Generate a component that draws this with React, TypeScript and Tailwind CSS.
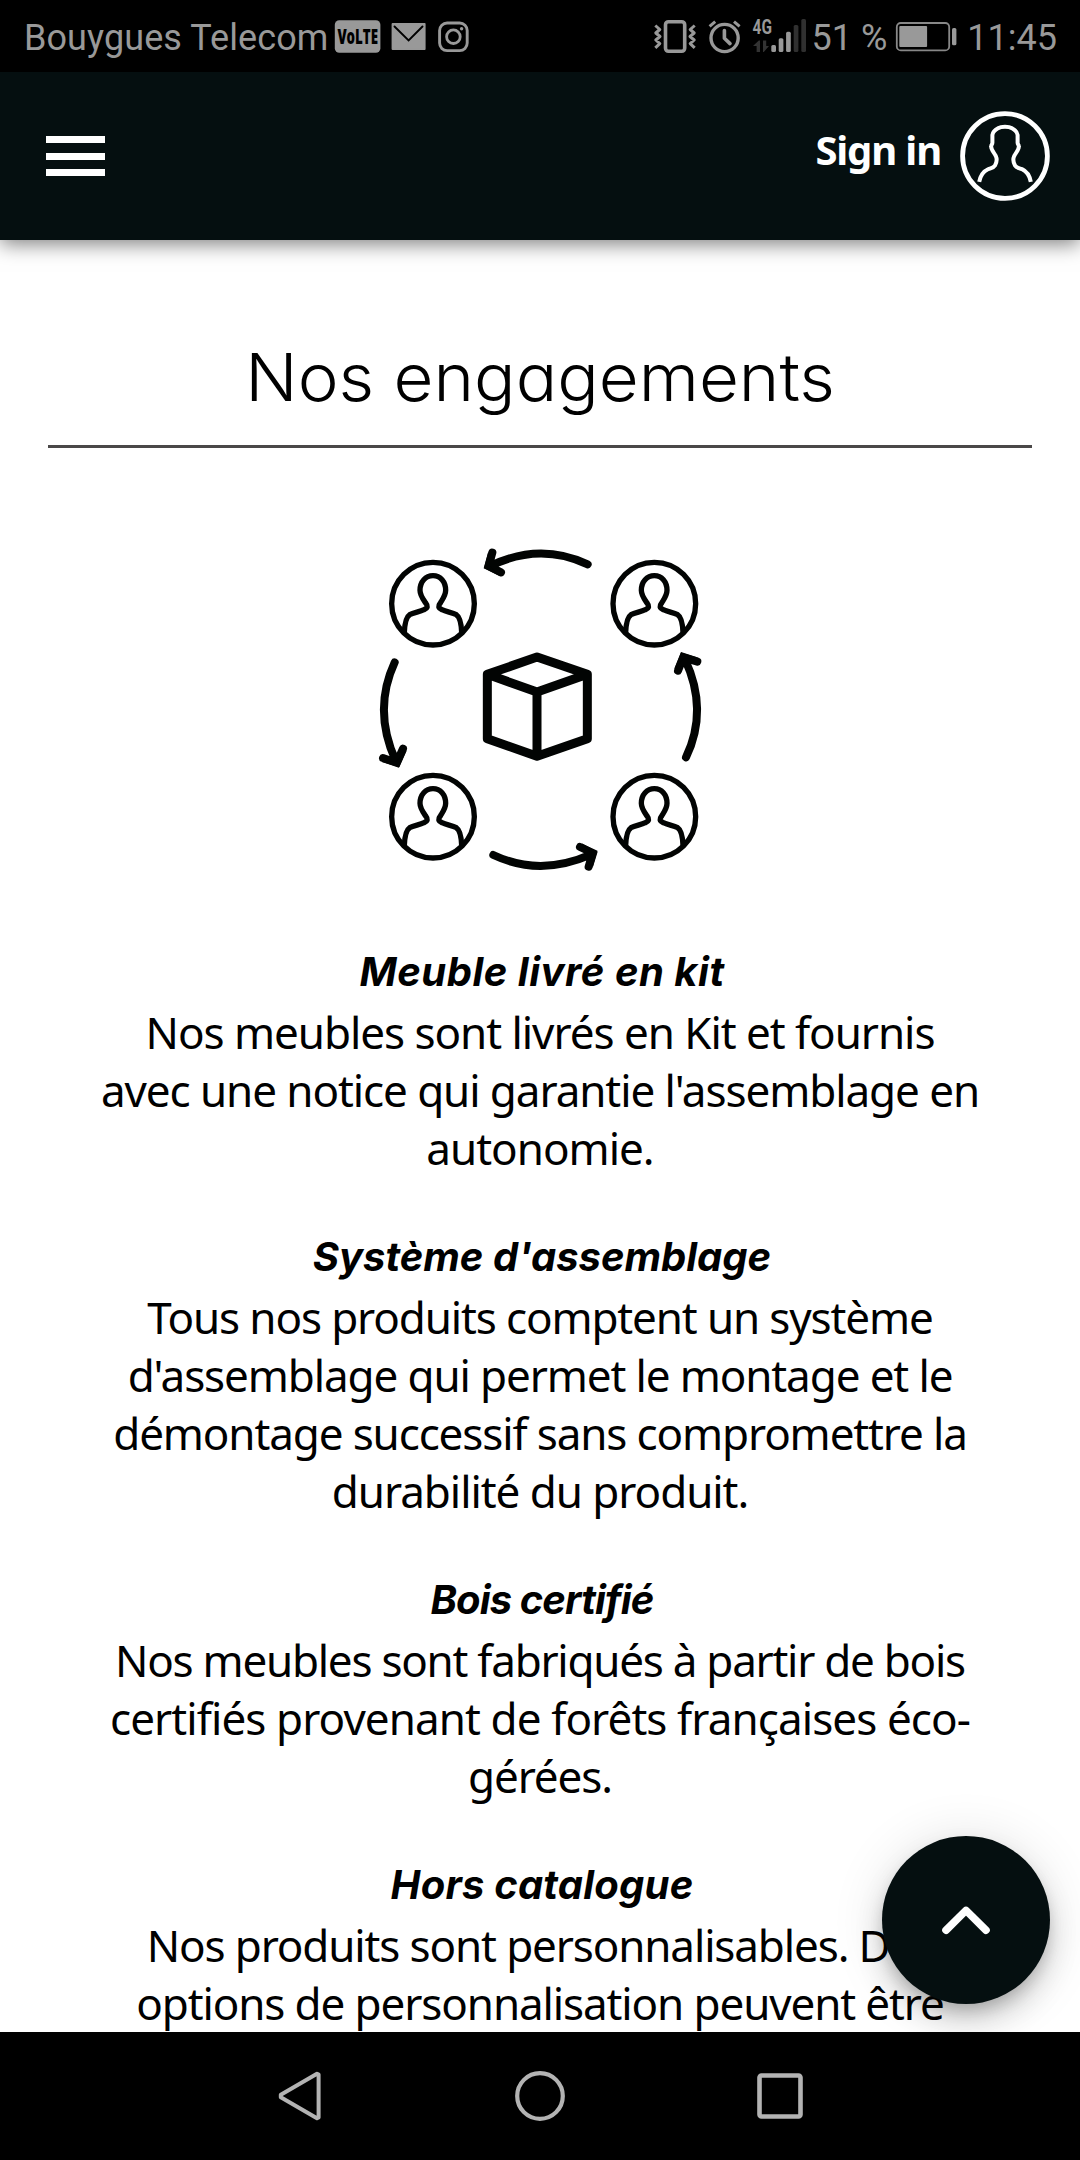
import React from 'react';

type Line = { text: string; tracking: string };
type Commitment = { title: string; titleTracking: string; lines: Line[] };

const commitments: Commitment[] = [
  {
    title: 'Meuble livré en kit',
    titleTracking: 'tracking-[0.5px]',
    lines: [
      { text: 'Nos meubles sont livrés en Kit et fournis', tracking: 'tracking-[-1.04px]' },
      { text: "avec une notice qui garantie l'assemblage en", tracking: 'tracking-[-1.08px]' },
      { text: 'autonomie.', tracking: 'tracking-[-1px]' },
    ],
  },
  {
    title: "Système d'assemblage",
    titleTracking: 'tracking-[0px]',
    lines: [
      { text: 'Tous nos produits comptent un système', tracking: 'tracking-[-1.13px]' },
      { text: "d'assemblage qui permet le montage et le", tracking: 'tracking-[-1.12px]' },
      { text: 'démontage successif sans compromettre la', tracking: 'tracking-[-1.13px]' },
      { text: 'durabilité du produit.', tracking: 'tracking-[-1.05px]' },
    ],
  },
  {
    title: 'Bois certifié',
    titleTracking: 'tracking-[-0.9px]',
    lines: [
      { text: 'Nos meubles sont fabriqués à partir de bois', tracking: 'tracking-[-1.26px]' },
      { text: 'certifiés provenant de forêts françaises éco-', tracking: 'tracking-[-0.91px]' },
      { text: 'gérées.', tracking: 'tracking-[-1.1px]' },
    ],
  },
  {
    title: 'Hors catalogue',
    titleTracking: 'tracking-[0.2px]',
    lines: [
      { text: 'Nos produits sont personnalisables. Des', tracking: 'tracking-[-1.13px]' },
      { text: 'options de personnalisation peuvent être', tracking: 'tracking-[-1.11px]' },
    ],
  },
];

function StatusBar() {
  return (
    <div className="flex h-[72px] shrink-0 items-center justify-between bg-black pr-[23px] pl-6 font-[Roboto,sans-serif] text-4xl text-[#999999]">
      <div className="flex items-center">
        <span className="pt-[3px] leading-[42px] tracking-[0.08px]">Bouygues Telecom</span>
        <svg className="ml-0.5 h-[72px] w-[145px]" viewBox="330 0 145 72" fill="none">
          <rect x="334.8" y="20.3" width="45.6" height="32.4" rx="4.5" fill="#999" />
          <text x="337.4" y="44" textLength="40.6" lengthAdjust="spacingAndGlyphs" className="fill-black font-['Open_Sans',sans-serif] text-[20.5px] font-extrabold">VoLTE</text>
          <rect x="391.6" y="23" width="34" height="27" rx="1" fill="#999" />
          <path d="M394.5 26.5 408.6 40.5 422.5 26.5" stroke="#000" strokeWidth="1.9" strokeLinecap="round" />
          <rect x="439.6" y="23" width="27.6" height="27.6" rx="7.5" stroke="#999" strokeWidth="2.9" />
          <circle cx="453.4" cy="36.7" r="6.8" stroke="#999" strokeWidth="2.8" />
          <circle cx="461.6" cy="28.8" r="1.7" fill="#999" />
        </svg>
      </div>
      <div className="flex items-center">
        <svg className="h-[72px] w-[161px]" viewBox="650 0 161 72" fill="none" stroke="#999">
          <rect x="664.5" y="21.7" width="19.2" height="29.6" rx="3" strokeWidth="3.6" />
          <path d="M654.3 25.5 658.8 29.5 654.8 33 659 36.5 654.8 40 658.8 43.6 654.3 47.8M693.7 25.5 689.2 29.5 693.2 33 689 36.5 693.2 40 689.2 43.6 693.7 47.8" strokeWidth="3" strokeLinejoin="round" />
          <circle cx="723.6" cy="38" r="13.6" strokeWidth="3.4" />
          <path d="M723.4 30.5V38.2L729 43.6" strokeWidth="3.6" strokeLinecap="round" strokeLinejoin="round" />
          <path d="M708.6 26.4 714.2 21.6M738.6 26.4 733 21.6" strokeWidth="3" />
          <g stroke="none">
            <text x="751.6" y="33.8" textLength="19.4" lengthAdjust="spacingAndGlyphs" className="fill-[#999999] text-[20.5px] font-bold">4G</text>
            <path d="M752 46 757.8 40.5H759V52H755.6V46ZM762 40.5H765.2V46H768L762.8 52H762Z" fill="#333" />
            <rect x="770.3" y="45" width="4.7" height="7" rx="1.5" fill="#999" />
            <rect x="777.7" y="38.3" width="4.7" height="13.7" rx="1.5" fill="#999" />
            <rect x="785.1" y="31.7" width="4.7" height="20.3" rx="1.5" fill="#999" />
            <rect x="792.7" y="25" width="4.7" height="27" rx="1.5" fill="#303030" />
            <rect x="800.3" y="19" width="4.7" height="33" rx="1.5" fill="#303030" />
          </g>
        </svg>
        <span className="pt-[3px] leading-[42px] whitespace-pre">51 %</span>
        <svg className="h-[72px] w-[80px]" viewBox="887 0 80 72" fill="none">
          <rect x="896.8" y="23" width="52.4" height="27.4" rx="4" stroke="#888" strokeWidth="1.8" />
          <rect x="899.3" y="26" width="27.8" height="21" rx="1" fill="#999" />
          <rect x="952" y="28" width="4.4" height="17.3" rx="1.6" fill="#999" />
        </svg>
        <span className="pt-[3px] leading-[42px]">11:45</span>
      </div>
    </div>
  );
}

function Header() {
  return (
    <header className="relative z-10 flex h-[168px] shrink-0 items-center justify-between bg-[#050f10] pr-[30px] pl-[45.5px] text-white shadow-[0_4px_19px_rgba(0,0,0,0.5)]">
      <button className="flex w-[59px] flex-col gap-[9.5px]" aria-label="Menu">
        <span className="h-[7px] bg-white" />
        <span className="h-[7px] bg-white" />
        <span className="h-[7px] bg-white" />
      </button>
      <div className="flex items-center gap-[19px]">
        <span className="pb-[13px] font-['Noto_Sans',sans-serif] text-[40px] font-bold tracking-[-1.15px]">Sign in</span>
        <svg className="size-[90px]" viewBox="0 0 90 90" fill="none" stroke="#fff">
          <circle cx="45" cy="45" r="42.4" strokeWidth="4.8" />
          <path
            d="M19.2 70.8C20.5 64 24 60 28 58.2C31 56.9 33.5 57 35 54.5C37 51 37.4 48.5 35.8 45C34 41.5 31 38.5 31.2 35.5C31.2 33 32.6 34 32.4 31V24C32.8 20.5 35.5 18.5 38 17.2C40 16 42.5 15.7 45 15.7C47.5 15.7 50 16 52 17.2C54.5 18.5 57.2 20.5 57.6 24V31C57.4 34 58.8 33 58.8 35.5C59 38.5 56 41.5 54.2 45C52.6 48.5 53 51 55 54.5C56.5 57 59 56.9 62 58.2C66 60 69.5 64 70.8 70.8"
            strokeWidth="4"
          />
        </svg>
      </div>
    </header>
  );
}

function Person({ x, y }: { x: number; y: number }) {
  return (
    <g transform={`translate(${x} ${y})`} strokeWidth="16">
      <circle r="124" />
      <path d="M-86 86C-85 62 -81 40 -70 33C-58 27 -40 24 -27 18C-15 13 -15 7 -22 -2C-31 -15 -39 -25 -39 -40C-39 -66 -22 -84 0 -84C22 -84 38 -66 38 -40C38 -25 30 -15 22 -2C15 7 15 13 27 18C40 24 58 27 70 33C81 40 85 62 86 86" />
    </g>
  );
}

function ExchangeIllustration() {
  return (
    <svg className="mt-[82px] size-[360px]" viewBox="0 0 1080 1080" fill="none" stroke="#020403">
      <Person x={219} y={221} />
      <Person x={883} y={221} />
      <Person x={219} y={860} />
      <Person x={883} y={860} />
      <g strokeWidth="24" strokeLinecap="round">
        <path d="M683 103Q540 36 393 107M397 68 386 108 423 127" />
        <path d="M104 397Q38 540 107 692M69 684 110 698 129 656" />
        <path d="M978 682Q1046 540 975 388M954 422 970 382 1012 395" />
        <path d="M400 975Q540 1041 692 974M660 951 698 969 686 1010" />
      </g>
      <g fill="#020403" stroke="none">
        <path d="M385 64 371 115 419 138 390 108Z" />
        <path d="M65 696 118 712 141 660 108 694Z" />
        <path d="M942 418 963 366 1016 383 972 386Z" />
        <path d="M664 939 713 965 698 1014 694 970Z" />
      </g>
      <path d="M531 381 682 433V626L531 679 382 626V433ZM382 433 531 486 682 433M531 486V679" strokeWidth="27" strokeLinejoin="round" />
    </svg>
  );
}

function NavigationBar() {
  return (
    <nav className="relative z-10 grid h-32 shrink-0 grid-cols-[240px_240px_240px] place-items-center justify-center bg-black">
      <svg className="size-[52px]" viewBox="0 0 52 52" fill="none" stroke="#b3b3b3" strokeWidth="4" strokeLinejoin="round">
        <path d="M44.6 4.5V47.5L43 48.3 6.8 27.2V24.8L43 3.7Z" />
      </svg>
      <svg className="size-[52px]" viewBox="0 0 52 52" fill="none" stroke="#b3b3b3" strokeWidth="4.2">
        <circle cx="26" cy="26" r="22.8" />
      </svg>
      <svg className="size-[52px]" viewBox="0 0 52 52" fill="none" stroke="#b3b3b3" strokeWidth="4.6">
        <rect x="5.5" y="5.5" width="41" height="41" rx="2" />
      </svg>
    </nav>
  );
}

export default function App() {
  return (
    <div className="relative flex h-[2160px] w-[1080px] flex-col overflow-hidden bg-white text-black">
      <StatusBar />
      <Header />
      <main className="flex h-[1792px] shrink-0 flex-col items-center overflow-hidden px-12 pt-[97px]">
        <h1 className="scale-x-[1.045] font-[Inter,sans-serif] text-[66px] leading-[80px] font-light [font-feature-settings:'cv11']">
          Nos engagements
        </h1>
        <hr className="mt-7 w-full border-t-[3px] border-[#4a4848]" />
        <ExchangeIllustration />
        <div className="mt-[52px] flex shrink-0 flex-col gap-[50px] text-center whitespace-nowrap">
          {commitments.map((c) => (
            <section key={c.title}>
              <h2 className="pl-1 font-[Inter,sans-serif] text-[40px] leading-[60px] font-bold italic [font-feature-settings:'cv11']">
                <span className={c.titleTracking}>{c.title}</span>
              </h2>
              <p className="pt-px font-['Noto_Sans',sans-serif] text-[44px] leading-[58px]">
                {c.lines.map((l) => (
                  <span key={l.text} className={`block ${l.tracking}`}>
                    {l.text}
                  </span>
                ))}
              </p>
            </section>
          ))}
        </div>
      </main>
      <button
        aria-label="Haut de page"
        className="absolute right-[30px] bottom-[156px] size-[168px] rounded-full bg-[#050f10] shadow-[0_9px_15px_-3px_rgba(0,0,0,0.2),0_18px_30px_rgba(0,0,0,0.14),0_3px_54px_rgba(0,0,0,0.12)]"
      >
        <svg className="size-full" viewBox="0 0 168 168" fill="none" stroke="#fff" strokeWidth="7.6" strokeLinecap="round" strokeLinejoin="round">
          <path d="M64 94.2 84 74.4 104 94.2" />
        </svg>
      </button>
      <NavigationBar />
    </div>
  );
}
